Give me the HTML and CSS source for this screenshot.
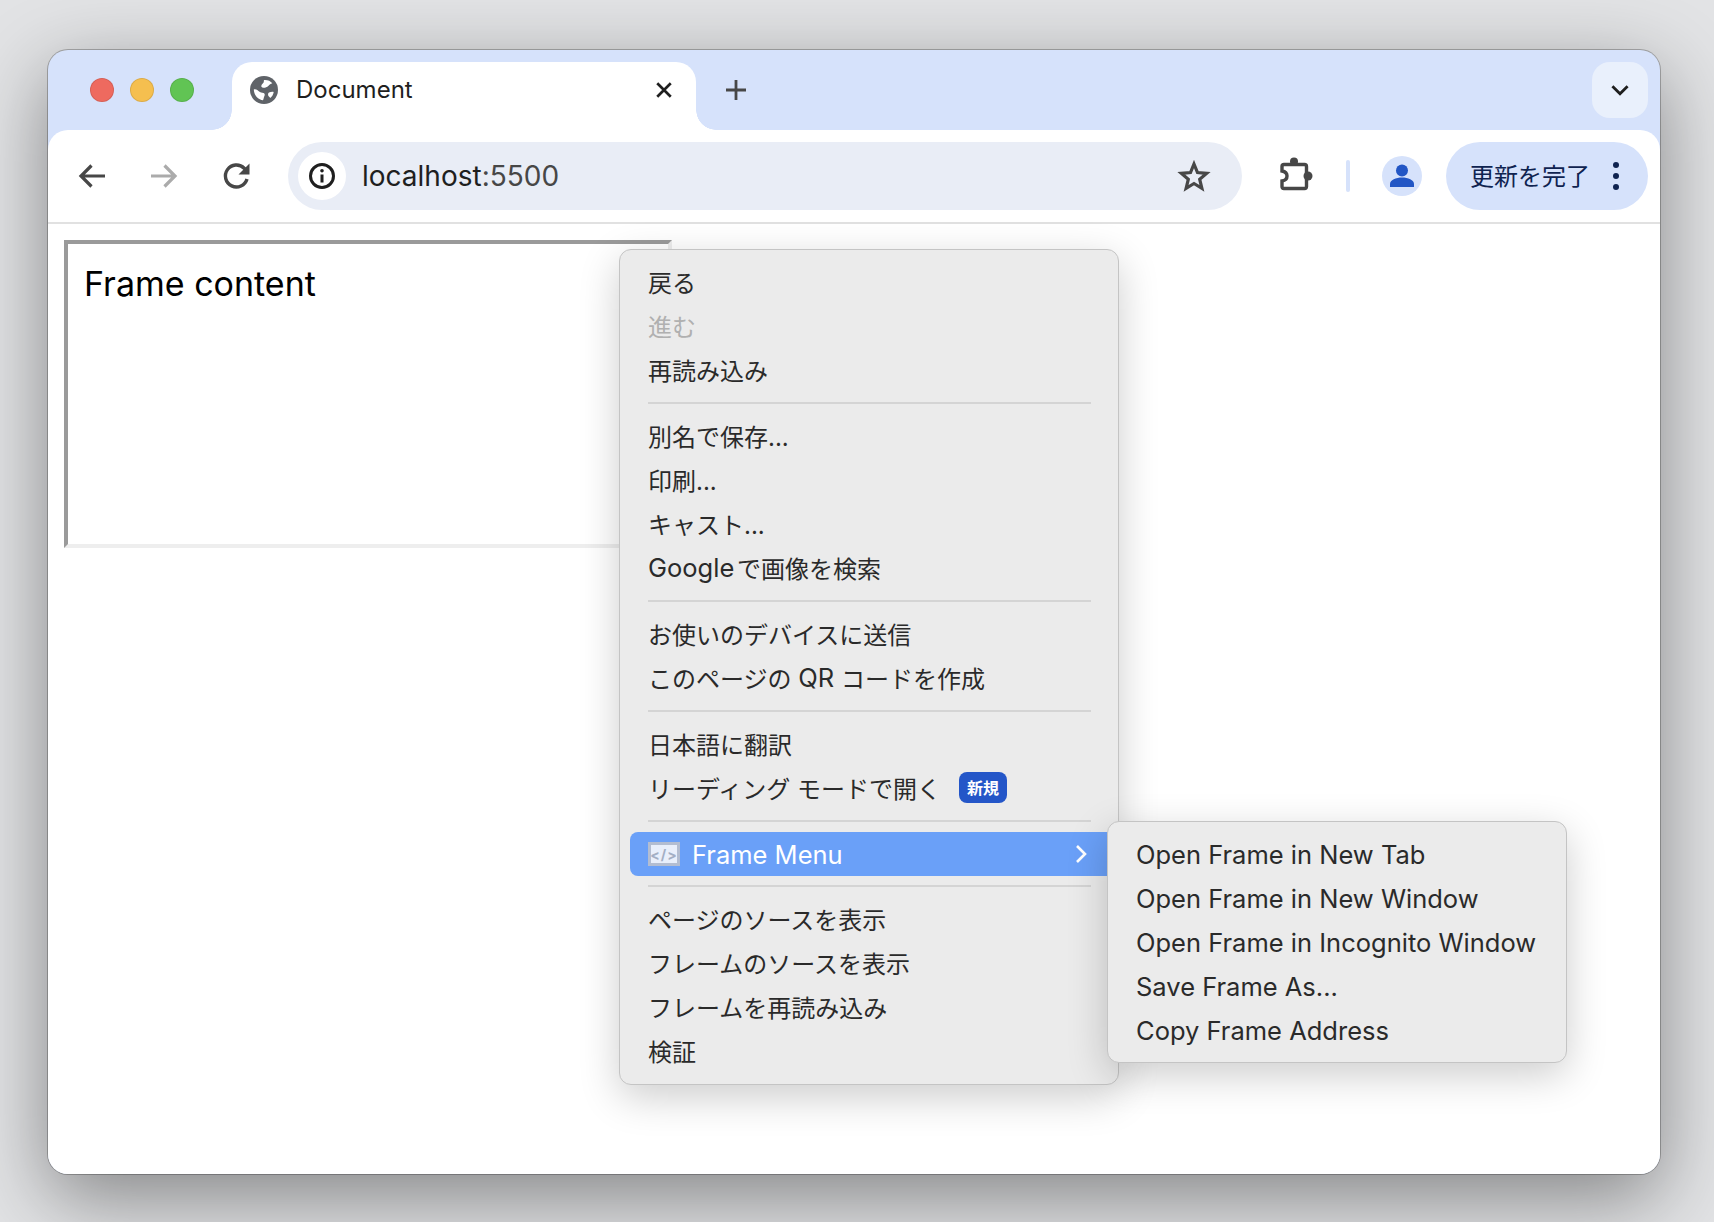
FILE: index.html
```html
<!DOCTYPE html>
<html lang="ja">
<head>
  <meta charset="UTF-8" />
  <meta name="viewport" content="width=device-width, initial-scale=1.0" />
  <title>Document</title>
  <link rel="stylesheet" href="styles.css">
</head>
<body>
  <div class="window">
    <div class="tabstrip">
      <div class="lights">
        <span class="light red"></span>
        <span class="light yellow"></span>
        <span class="light green"></span>
      </div>
      <div class="tab">
        <svg class="favicon" viewBox="0 0 28 28">
          <circle cx="14" cy="14" r="14" fill="#5f6368"/>
          <path d="M14 4c3.600-.3 6.500 1 8.300 3.200-1.700.3-2.700 1.500-4 2.800-1.300 1.300-3.200 1.900-5 1.800-1.500-.1-2.300-1-1.900-2.300.4-1.500 1.900-2 2.300-3.200.2-.7.100-1.800.300-2.300z" fill="#fff"/>
          <path d="M3.800 13.500c1.900-.6 3.500.3 5 1.700 1.400 1.300 3.200 1.400 4.700 1.900 1.400.5 1.500 1.900.8 3.100-.6 1.200-.6 2.700-1.300 4.100-4.800-.4-9-5-9.200-10.800z" fill="#fff"/>
          <path d="M19 16.500c1.600-.7 3.300-.9 4.700-.6-.4 2.500-1.600 4.500-3.400 6-.8-1.100-2-1.600-2.200-3-.1-1 .1-2 .9-2.400z" fill="#fff"/>
        </svg>
        <span class="tab-title">Document</span>
        <svg class="tab-close" viewBox="0 0 16 16">
          <path d="M2 2l12 12M14 2L2 14" stroke="#1f1f1f" stroke-width="2.400" fill="none"/>
        </svg>
      </div>
      <div class="new-tab">
        <svg viewBox="0 0 24 24" width="24" height="24">
          <path d="M12 2v20M2 12h20" stroke="#474747" stroke-width="2.800" fill="none"/>
        </svg>
      </div>
      <div class="tab-search">
        <svg viewBox="0 0 18 12" width="20" height="13">
          <path d="M2 2l7 7 7-7" stroke="#1f1f1f" stroke-width="2.600" fill="none"/>
        </svg>
      </div>
    </div>

    <div class="toolbar">
      <div class="nav-btn">
        <svg viewBox="0 0 32 32" width="32" height="32">
          <path d="M29 16H6M15.500 5.500L5 16l10.500 10.500" stroke="#474747" stroke-width="3.200" fill="none"/>
        </svg>
      </div>
      <div class="nav-btn">
        <svg viewBox="0 0 32 32" width="32" height="32">
          <path d="M3 16h23M16.500 5.500L27 16 16.500 26.500" stroke="#ababab" stroke-width="3.200" fill="none"/>
        </svg>
      </div>
      <div class="nav-btn">
        <svg viewBox="-1 0 32 32" width="32" height="32">
          <path d="M26 19a11 11 0 1 1-2.800-10.800L27 12" stroke="#474747" stroke-width="3.400" fill="none"/>
          <path d="M28.500 3.500v11h-11z" fill="#474747"/>
        </svg>
      </div>
      <div class="omnibox">
        <div class="info-chip">
          <svg viewBox="0 0 28 28" width="28" height="28">
            <circle cx="14" cy="14" r="11.500" stroke="#1f1f1f" stroke-width="3" fill="none"/>
            <circle cx="14" cy="8.700" r="1.800" fill="#1f1f1f"/>
            <path d="M14 12.500v8" stroke="#1f1f1f" stroke-width="3" fill="none"/>
          </svg>
        </div>
        <span class="url">localhost<span class="url-port">:5500</span></span>
        <svg class="star" viewBox="0 0 34 34" width="34" height="34">
          <path d="M17 5l3.500 8.500 9.200.8-7 6 2.200 9-7.900-4.800-7.900 4.800 2.200-9-7-6 9.200-.8z" stroke="#474747" stroke-width="3.200" stroke-linejoin="miter" fill="none"/>
        </svg>
      </div>
      <div class="ext-btn">
        <svg viewBox="0 0 40 40" width="40" height="40">
          <path d="M10 8.500H30.500a2 2 0 0 1 2 2V30.500a2 2 0 0 1-2 2H10a2 2 0 0 1-2-2V25c3-.5 5-2.500 5-5s-2-4.500-5-5V10.500a2 2 0 0 1 2-2z" stroke="#474747" stroke-width="3.400" fill="none"/>
          <circle cx="20" cy="5.500" r="4" fill="#474747"/>
          <circle cx="34" cy="20" r="4.500" fill="#474747"/>
        </svg>
      </div>
      <div class="toolbar-sep"></div>
      <div class="avatar">
        <svg viewBox="0 0 40 40" width="40" height="40">
          <circle cx="20" cy="14.500" r="6" fill="#2256c5"/>
          <path d="M8 31v-3c0-4 6-6.500 12-6.500S32 24 32 28v3z" fill="#2256c5"/>
        </svg>
      </div>
      <div class="update-btn">
        <span class="update-label">更新を完了</span>
        <span class="dots"><i></i><i></i><i></i></span>
      </div>
    </div>

    <div class="page">
      <div class="frame">Frame content</div>

      <div class="menu main-menu">
        <div class="item">戻る</div>
        <div class="item disabled">進む</div>
        <div class="item">再読み込み</div>
        <div class="sep"></div>
        <div class="item">別名で保存...</div>
        <div class="item">印刷...</div>
        <div class="item">キャスト...</div>
        <div class="item"><span class="latin tight">Google</span> で画像を検索</div>
        <div class="sep"></div>
        <div class="item">お使いのデバイスに送信</div>
        <div class="item">このページの <span class="latin">QR</span> コードを作成</div>
        <div class="sep"></div>
        <div class="item">日本語に翻訳</div>
        <div class="item">リーディング モードで開く<span class="badge">新規</span></div>
        <div class="sep"></div>
        <div class="item active">
          <span class="code-icon">&lt;/&gt;</span>
          <span class="latin">Frame Menu</span>
          <svg class="arrow" viewBox="0 0 12 20" width="12" height="20">
            <path d="M2 2l8 8-8 8" stroke="#fff" stroke-width="2.600" fill="none"/>
          </svg>
        </div>
        <div class="sep"></div>
        <div class="item">ページのソースを表示</div>
        <div class="item">フレームのソースを表示</div>
        <div class="item">フレームを再読み込み</div>
        <div class="item">検証</div>
      </div>

      <div class="menu sub-menu">
        <div class="item">Open Frame in New Tab</div>
        <div class="item">Open Frame in New Window</div>
        <div class="item">Open Frame in Incognito Window</div>
        <div class="item">Save Frame As...</div>
        <div class="item">Copy Frame Address</div>
      </div>
    </div>
  </div>
</body>
</html>
```

FILE: styles.css
```css
* {
  box-sizing: border-box;
}

html, body {
  height: 100%;
}

body {
  margin: 0;
  padding: 50px 0 0 48px;
  overflow: hidden;
  background-color: #e2e3e5;
  font-family: Inter, "Noto Sans CJK JP", sans-serif;
}

.window {
  width: 1612px;
  height: 1124px;
  display: flex;
  flex-direction: column;
  border-radius: 20px;
  overflow: hidden;
  background-color: #d6e2fb;
  box-shadow: 0 0 0 1px rgba(0, 0, 0, 0.25), 0 24px 80px rgba(0, 0, 0, 0.42);
}

/* tab strip */
.tabstrip {
  height: 80px;
  flex: none;
  display: flex;
  align-items: flex-start;
  padding-top: 12px;
}

.lights {
  height: 56px;
  display: flex;
  align-items: center;
  gap: 16px;
  margin-left: 42px;
}

.light {
  width: 24px;
  height: 24px;
  border-radius: 50%;
  border: 1px solid rgba(0, 0, 0, 0.1);
}

.red { background-color: #ee6a5f; }
.yellow { background-color: #f5bf4f; }
.green { background-color: #61c454; }

.tab {
  position: relative;
  width: 464px;
  height: 68px;
  margin-left: 38px;
  padding: 0 23px 12px 18px;
  display: flex;
  align-items: center;
  gap: 18px;
  background-color: #fff;
  border-radius: 20px 20px 0 0;
}

.tab::before,
.tab::after {
  content: "";
  position: absolute;
  bottom: 0;
  width: 20px;
  height: 20px;
}

.tab::before {
  left: -20px;
  background: radial-gradient(circle at 0 0, transparent 19.500px, #fff 20px);
}

.tab::after {
  right: -20px;
  background: radial-gradient(circle at 100% 0, transparent 19.500px, #fff 20px);
}

.favicon {
  width: 28px;
  height: 28px;
  flex: none;
}

.tab-title {
  padding-bottom: 2px;
  font-size: 24px;
  color: #1f1f1f;
}

.tab-close {
  width: 18px;
  height: 18px;
  margin-left: auto;
}

.new-tab {
  width: 24px;
  height: 56px;
  margin-left: 28px;
  display: flex;
  align-items: center;
}

.tab-search {
  width: 56px;
  height: 56px;
  margin-left: auto;
  margin-right: 12px;
  display: flex;
  align-items: center;
  justify-content: center;
  background-color: #e9f0fc;
  border-radius: 18px;
}

/* toolbar */
.toolbar {
  height: 94px;
  flex: none;
  display: flex;
  align-items: center;
  padding: 0 12px 0 8px;
  background-color: #fff;
  border-bottom: 2px solid #e1e1e1;
  border-radius: 20px 20px 0 0;
}

.nav-btn {
  width: 72px;
  display: flex;
  justify-content: center;
}

.omnibox {
  width: 954px;
  height: 68px;
  margin-left: 16px;
  padding: 0 31px 0 10px;
  display: flex;
  align-items: center;
  background-color: #e9edf6;
  border-radius: 34px;
}

.info-chip {
  width: 48px;
  height: 48px;
  flex: none;
  display: flex;
  align-items: center;
  justify-content: center;
  background-color: #fff;
  border-radius: 50%;
}

.url {
  margin-left: 16px;
  font-size: 28px;
  color: #1f1f1f;
}

.url-port {
  color: #474747;
}

.star {
  margin-left: auto;
}

.ext-btn {
  width: 48px;
  margin-left: 28px;
  display: flex;
  justify-content: center;
}

.toolbar-sep {
  width: 4px;
  height: 32px;
  margin-left: 28px;
  background-color: #d6e2fb;
  border-radius: 2px;
}

.avatar {
  width: 40px;
  height: 40px;
  margin-left: 32px;
  background-color: #d6e2fb;
  border-radius: 50%;
}

.avatar svg {
  display: block;
}

.update-btn {
  width: 202px;
  height: 68px;
  margin-left: 24px;
  padding: 0 29px 0 24px;
  display: flex;
  align-items: center;
  justify-content: space-between;
  font-size: 24px;
  color: #0f2350;
  background-color: #d6e2fb;
  border-radius: 34px;
}

.update-label {
  padding-bottom: 4px;
}

.dots {
  display: flex;
  flex-direction: column;
  gap: 5px;
}

.dots i {
  width: 6px;
  height: 6px;
  background-color: #0f2350;
  border-radius: 50%;
}

/* page */
.page {
  position: relative;
  flex: 1;
  padding: 16px;
  background-color: #fff;
}

.frame {
  width: 608px;
  height: 308px;
  padding: 19px 16px;
  font-size: 34px;
  color: #000;
  border-width: 4px;
  border-style: solid;
  border-color: #9a9a9a #eeeeee #eeeeee #9a9a9a;
}

/* context menus */
.menu {
  position: absolute;
  padding: 11px 0 8px;
  font-size: 24px;
  color: #2a2a2a;
  background-color: #ebebeb;
  border: 1px solid #c4c4c4;
  border-radius: 12px;
  box-shadow: 0 12px 40px rgba(0, 0, 0, 0.2);
}

.main-menu {
  left: 571px;
  top: 25px;
  width: 500px;
  height: 836px;
}

.sub-menu {
  left: 1059px;
  top: 597px;
  width: 460px;
  height: 242px;
  font-size: 25.500px;
}

.item {
  height: 44px;
  padding: 0 28px 4px;
  display: flex;
  align-items: center;
  white-space: pre;
}

.sub-menu .item {
  padding-bottom: 2px;
}

.latin {
  font-size: 25.500px;
}

.tight {
  margin-right: -4px;
}

.disabled {
  color: #b0b0b0;
}

.sep {
  height: 2px;
  margin: 9px 27px 11px 28px;
  background-color: #d4d4d4;
}

.badge {
  width: 48px;
  height: 31px;
  margin-left: 18px;
  display: flex;
  align-items: center;
  justify-content: center;
  font-size: 16px;
  font-weight: 700;
  color: #fff;
  background-color: #2456c8;
  border-radius: 8px;
}

.active {
  margin: -1px -10px 2px 10px;
  padding: 0 18px;
  color: #fff;
  background-color: #6aa0f8;
  border-radius: 8px;
}

.code-icon {
  width: 32px;
  height: 24px;
  margin-right: 12px;
  display: flex;
  align-items: center;
  justify-content: center;
  font-size: 14px;
  font-weight: 700;
  letter-spacing: 1px;
  color: #a3aec4;
  background-color: #e9effb;
  border: 3px solid #b3bdd1;
}

.arrow {
  margin-left: auto;
  margin-right: 23px;
}
```
